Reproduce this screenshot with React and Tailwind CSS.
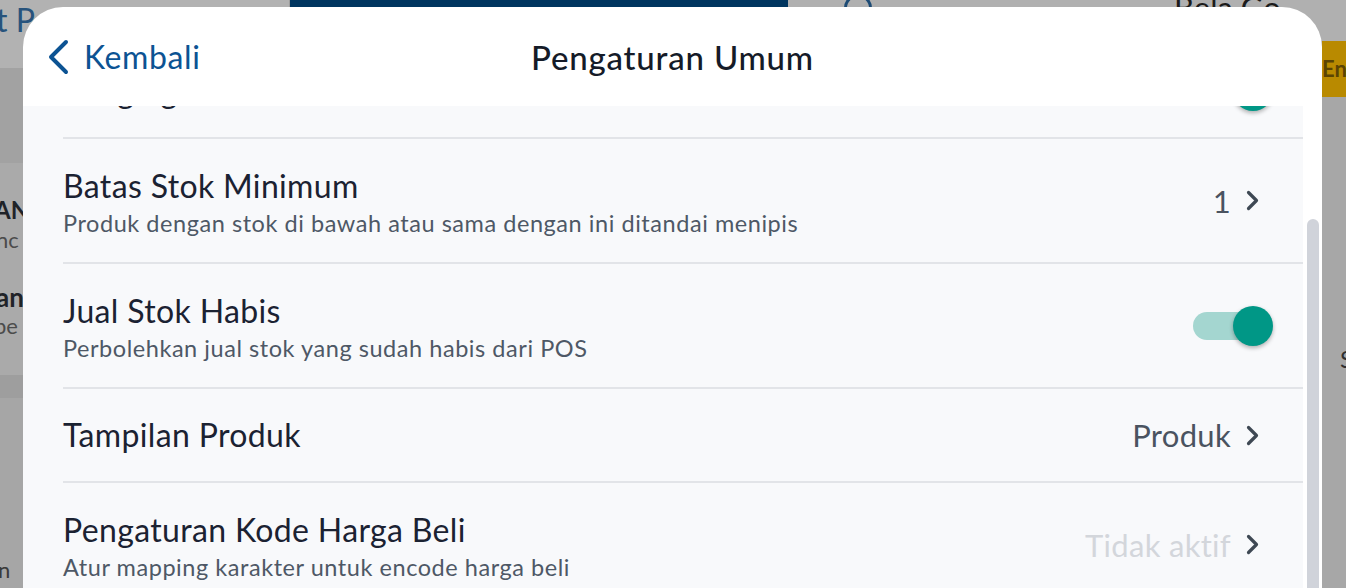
import clsx from 'clsx'

const rows = [
  { title: 'Pengingat Stok', toggle: true },
  { title: 'Batas Stok Minimum', desc: 'Produk dengan stok di bawah atau sama dengan ini ditandai menipis', value: '1' },
  { title: 'Jual Stok Habis', desc: 'Perbolehkan jual stok yang sudah habis dari POS', toggle: true },
  { title: 'Tampilan Produk', value: 'Produk' },
  { title: 'Pengaturan Kode Harga Beli', desc: 'Atur mapping karakter untuk encode harga beli', value: 'Tidak aktif', muted: true },
]

function Chevron({ className = '' }) {
  return (
    <svg viewBox="0 0 13 20" className={className} fill="none" stroke="currentColor" strokeWidth="3.2" strokeLinecap="round" strokeLinejoin="round">
      <path d="M2.5 2l8 8-8 8" />
    </svg>
  )
}

function Toggle() {
  return (
    <div className="relative w-[80px] h-[40px] mr-[-14px]">
      <div className="absolute left-0 top-[6px] w-[73px] h-[28px] rounded-full bg-[#a4d6d0]" />
      <div className="absolute right-0 top-0 w-[40px] h-[40px] rounded-full bg-[#009786] shadow-[0_2px_4px_rgba(0,0,0,0.3)]" />
    </div>
  )
}

function Row({ r }) {
  return (
    <div className={clsx('flex items-center border-b-2 border-[#e2e4e8] pr-[44px]', r.desc ? 'h-[125px]' : 'h-[94px]')}>
      <div className={clsx('flex-1 min-w-0', r.desc && 'pt-[5px]')}>
        <div className="text-[32px] leading-[40px] tracking-[0.35px] text-[#1b2232]">{r.title}</div>
        {r.desc && <div className="text-[23.5px] leading-[34px] tracking-[0.55px] text-[#4e5866]">{r.desc}</div>}
      </div>
      {r.toggle ? <Toggle /> : (
        <div className="flex items-center gap-[15px]">
          <span className={clsx('text-[31px] leading-[40px] tracking-[0.3px]', r.muted ? 'text-[#d3d6db]' : 'text-[#4a5360]')}>{r.value}</span>
          <Chevron className="w-[13px] h-[21px] text-[#3e4853]" />
        </div>
      )}
    </div>
  )
}

export default function App() {
  return (
    <div className="relative w-[1346px] h-[588px] overflow-hidden bg-[#a7a7a7] font-['Lato','Open_Sans',sans-serif]">
      {/* app behind the sheet, dimmed */}
      <div className="flex h-full">
        <div className="w-[290px] flex flex-col border-r border-[#9c9c9c]">
          <div className="h-[68px] bg-[#b2b2b2] text-[32px] leading-[36px] text-[#27537c] pt-[2px] ml-[-4px]">t Po</div>
          <div className="h-[95px] bg-[#a2a2a2]" />
          <div className="h-[212px] bg-[#aaaaaa] pt-[32px]">
            <div className="text-[24px] font-bold text-[#1f2328] ml-[-6px] leading-[30px]">AN</div>
            <div className="text-[22px] text-[#4c4c4c] ml-[-4px] leading-[30px]">nc</div>
            <div className="text-[26px] font-bold text-[#1f2328] ml-[-4px] mt-[26px] leading-[32px]">an</div>
            <div className="text-[22px] text-[#4c4c4c] ml-[-6px] leading-[26px]">pe</div>
          </div>
          <div className="h-[23px] bg-[#9e9e9e]" />
          <div className="flex-1 bg-[#a6a6a6] flex items-end pb-[2px]">
            <span className="text-[22px] text-[#3a3a3a] ml-[-2px]">n</span>
          </div>
        </div>
        <div className="w-[498px] flex flex-col">
          <div className="h-[70px] bg-[#00355f]" />
        </div>
        <div className="flex-1 flex flex-col">
          <div className="h-[41px] bg-[#b0b0b0] flex">
            <div className="w-[28px] h-[28px] rounded-full border-[3px] border-[#1d4b75] mt-[-6px] ml-[56px]" />
            <div className="text-[31px] leading-[34px] text-[#1b1b1b] ml-[302px] mt-[-10px]">Bela Go</div>
          </div>
          <div className="flex-1 flex justify-end">
            <div className="w-[24px] flex flex-col">
              <div className="h-[56px] bg-[#b98a00] text-[22px] font-bold leading-[56px] text-[#5b4403]">En</div>
              <div className="text-[24px] text-[#2f2f2f] mt-[244px] ml-[18px]">S</div>
            </div>
          </div>
        </div>
      </div>

      {/* sheet */}
      <div className="absolute left-[23px] top-[7px] w-[1299px] h-[620px] rounded-t-[40px] bg-white flex flex-col overflow-hidden">
        <div className="relative h-[99px] shrink-0 flex items-center justify-center">
          <div className="absolute left-[24px] top-0 h-full flex items-center gap-[15px] text-[#0c5393]">
            <svg viewBox="0 0 22 36" className="w-[22px] h-[36px]" fill="none" stroke="currentColor" strokeWidth="4" strokeLinecap="round" strokeLinejoin="round">
              <path d="M19 3L4 18l15 15" />
            </svg>
            <span className="text-[32px] leading-[40px] tracking-[0.6px]">Kembali</span>
          </div>
          <div className="text-[33px] leading-[40px] tracking-[0.8px] text-[#151b28] font-medium">Pengaturan Umum</div>
        </div>
        <div className="flex-1 flex min-h-0">
          <div className="flex-1 bg-[#f8f9fb] overflow-hidden">
            <div className="ml-[40px] mt-[-61px]">
              {rows.map(r => <Row key={r.title} r={r} />)}
            </div>
          </div>
          <div className="w-[19px] pl-[4px] pt-[113px]">
            <div className="w-[12px] h-[600px] rounded-full bg-[#d0d3da]" />
          </div>
        </div>
      </div>
    </div>
  )
}
